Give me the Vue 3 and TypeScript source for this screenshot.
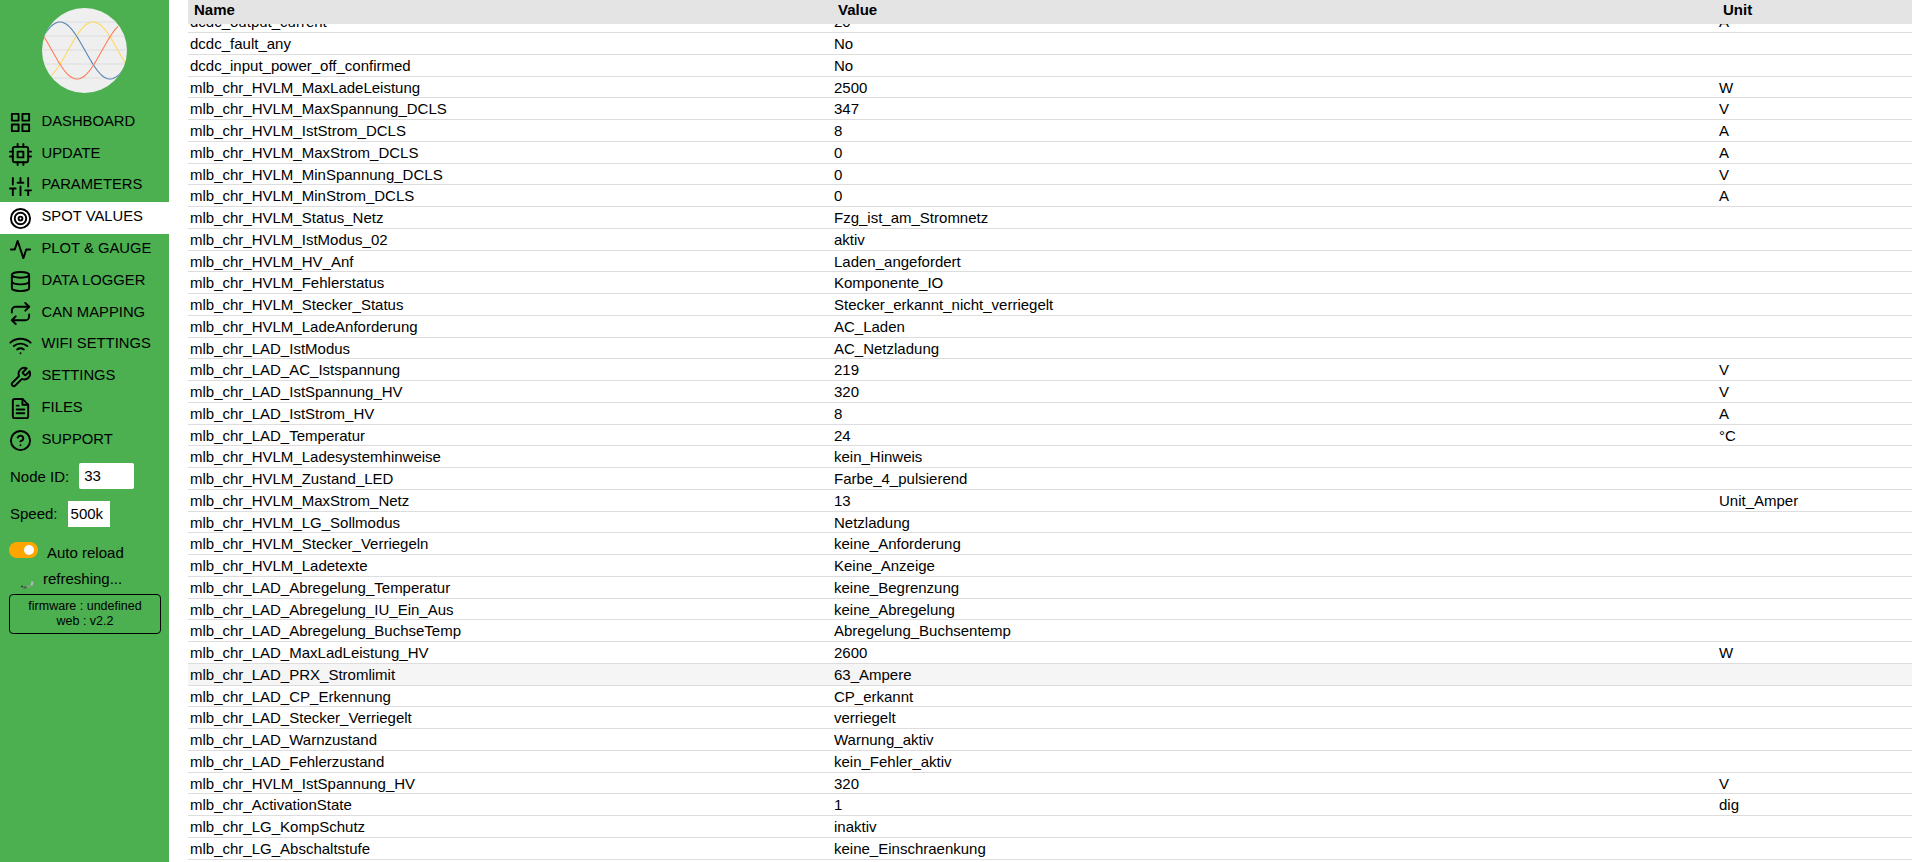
<script setup lang="ts">
interface Row { n: string; v: string; u: string; hover?: boolean }
const raw: [string, string, string][] = [
  ['dcdc_output_current', '20', 'A'],
  ['dcdc_fault_any', 'No', ''],
  ['dcdc_input_power_off_confirmed', 'No', ''],
  ['mlb_chr_HVLM_MaxLadeLeistung', '2500', 'W'],
  ['mlb_chr_HVLM_MaxSpannung_DCLS', '347', 'V'],
  ['mlb_chr_HVLM_IstStrom_DCLS', '8', 'A'],
  ['mlb_chr_HVLM_MaxStrom_DCLS', '0', 'A'],
  ['mlb_chr_HVLM_MinSpannung_DCLS', '0', 'V'],
  ['mlb_chr_HVLM_MinStrom_DCLS', '0', 'A'],
  ['mlb_chr_HVLM_Status_Netz', 'Fzg_ist_am_Stromnetz', ''],
  ['mlb_chr_HVLM_IstModus_02', 'aktiv', ''],
  ['mlb_chr_HVLM_HV_Anf', 'Laden_angefordert', ''],
  ['mlb_chr_HVLM_Fehlerstatus', 'Komponente_IO', ''],
  ['mlb_chr_HVLM_Stecker_Status', 'Stecker_erkannt_nicht_verriegelt', ''],
  ['mlb_chr_HVLM_LadeAnforderung', 'AC_Laden', ''],
  ['mlb_chr_LAD_IstModus', 'AC_Netzladung', ''],
  ['mlb_chr_LAD_AC_Istspannung', '219', 'V'],
  ['mlb_chr_LAD_IstSpannung_HV', '320', 'V'],
  ['mlb_chr_LAD_IstStrom_HV', '8', 'A'],
  ['mlb_chr_LAD_Temperatur', '24', '°C'],
  ['mlb_chr_HVLM_Ladesystemhinweise', 'kein_Hinweis', ''],
  ['mlb_chr_HVLM_Zustand_LED', 'Farbe_4_pulsierend', ''],
  ['mlb_chr_HVLM_MaxStrom_Netz', '13', 'Unit_Amper'],
  ['mlb_chr_HVLM_LG_Sollmodus', 'Netzladung', ''],
  ['mlb_chr_HVLM_Stecker_Verriegeln', 'keine_Anforderung', ''],
  ['mlb_chr_HVLM_Ladetexte', 'Keine_Anzeige', ''],
  ['mlb_chr_LAD_Abregelung_Temperatur', 'keine_Begrenzung', ''],
  ['mlb_chr_LAD_Abregelung_IU_Ein_Aus', 'keine_Abregelung', ''],
  ['mlb_chr_LAD_Abregelung_BuchseTemp', 'Abregelung_Buchsentemp', ''],
  ['mlb_chr_LAD_MaxLadLeistung_HV', '2600', 'W'],
  ['mlb_chr_LAD_PRX_Stromlimit', '63_Ampere', ''],
  ['mlb_chr_LAD_CP_Erkennung', 'CP_erkannt', ''],
  ['mlb_chr_LAD_Stecker_Verriegelt', 'verriegelt', ''],
  ['mlb_chr_LAD_Warnzustand', 'Warnung_aktiv', ''],
  ['mlb_chr_LAD_Fehlerzustand', 'kein_Fehler_aktiv', ''],
  ['mlb_chr_HVLM_IstSpannung_HV', '320', 'V'],
  ['mlb_chr_ActivationState', '1', 'dig'],
  ['mlb_chr_LG_KompSchutz', 'inaktiv', ''],
  ['mlb_chr_LG_Abschaltstufe', 'keine_Einschraenkung', ''],
]
const rows: Row[] = raw.map(([n, v, u]) => ({ n, v, u, hover: n === 'mlb_chr_LAD_PRX_Stromlimit' }))
const nav = ['DASHBOARD', 'UPDATE', 'PARAMETERS', 'SPOT VALUES', 'PLOT & GAUGE', 'DATA LOGGER', 'CAN MAPPING', 'WIFI SETTINGS', 'SETTINGS', 'FILES', 'SUPPORT']

function wave(peakX: number, sign: number, from: number, to: number): string {
  const pts: string[] = []
  for (let x = from; x <= to; x += 1) {
    const y = 42.5 - sign * 28.5 * Math.cos((Math.PI * (x - peakX)) / 50)
    pts.push(`${x} ${y.toFixed(2)}`)
  }
  return 'M' + pts.join('L')
}
const blue = wave(18, 1, 2, 80)
const red = wave(35, -1, 2, 76)
const yellow = wave(51, 1, 9, 83)
</script>

<template>
  <div class="page">
    <aside class="side">
      <div class="logo">
        <svg width="85" height="85" viewBox="0 0 85 85">
          <defs><clipPath id="lc"><circle cx="42.5" cy="42.5" r="42.5" /></clipPath></defs>
          <circle cx="42.5" cy="42.5" r="42.5" fill="#efefef" />
          <g clip-path="url(#lc)" fill="none" stroke-width="1.1">
            <path d="M0 14H85M0 28H85M0 42H85M0 56H85M0 70H85" stroke="#dedede" stroke-width="1.2" />
            <path :d="yellow" stroke="#ffd95e" />
            <path :d="blue" stroke="#5585b5" />
            <path :d="red" stroke="#ff7b54" />
          </g>
        </svg>
      </div>
      <nav class="nav">
        <a v-for="(item, i) in nav" :key="item" class="item" :class="{ active: i === 3 }">
          <svg class="ico" viewBox="0 0 24 24" fill="none" stroke="#000" stroke-width="2" stroke-linecap="round" stroke-linejoin="round">
            <template v-if="i === 0"><rect x="3" y="3" width="7" height="7" /><rect x="14" y="3" width="7" height="7" /><rect x="14" y="14" width="7" height="7" /><rect x="3" y="14" width="7" height="7" /></template>
            <template v-else-if="i === 1"><rect x="4" y="4" width="16" height="16" rx="2" /><rect x="9" y="9" width="6" height="6" /><path d="M9 1v3M15 1v3M9 20v3M15 20v3M20 9h3M20 14h3M1 9h3M1 14h3" /></template>
            <template v-else-if="i === 2"><path d="M4 21v-7M4 10V3M12 21v-9M12 8V3M20 21v-5M20 12V3M1 14h6M9 8h6M17 16h6" /></template>
            <template v-else-if="i === 3"><circle cx="12" cy="12" r="10" /><circle cx="12" cy="12" r="6" /><circle cx="12" cy="12" r="2" /></template>
            <template v-else-if="i === 4"><path d="M22 12h-4l-3 9L9 3l-3 9H2" /></template>
            <template v-else-if="i === 5"><ellipse cx="12" cy="5" rx="9" ry="3" /><path d="M21 12c0 1.66-4 3-9 3s-9-1.34-9-3" /><path d="M3 5v14c0 1.66 4 3 9 3s9-1.34 9-3V5" /></template>
            <template v-else-if="i === 6"><path d="M17 1l4 4-4 4" /><path d="M3 11V9a4 4 0 0 1 4-4h14" /><path d="M7 23l-4-4 4-4" /><path d="M21 13v2a4 4 0 0 1-4 4H3" /></template>
            <template v-else-if="i === 7"><path d="M5 12.55a11 11 0 0 1 14.08 0" /><path d="M1.42 9a16 16 0 0 1 21.16 0" /><path d="M8.53 16.11a6 6 0 0 1 6.95 0" /><path d="M12 20h.01" /></template>
            <template v-else-if="i === 8"><path d="M14.7 6.3a1 1 0 0 0 0 1.4l1.6 1.6a1 1 0 0 0 1.4 0l3.77-3.77a6 6 0 0 1-7.94 7.94l-6.91 6.91a2.12 2.12 0 0 1-3-3l6.91-6.91a6 6 0 0 1 7.94-7.94l-3.76 3.76z" /></template>
            <template v-else-if="i === 9"><path d="M14 2H6a2 2 0 0 0-2 2v16a2 2 0 0 0 2 2h12a2 2 0 0 0 2-2V8z" /><path d="M14 2v6h6M16 13H8M16 17H8M10 9H8" /></template>
            <template v-else><circle cx="12" cy="12" r="10" /><path d="M9.09 9a3 3 0 0 1 5.83 1c0 2-3 3-3 3" /><path d="M12 17h.01" /></template>
          </svg>
          <span>{{ item }}</span>
        </a>
      </nav>
      <div class="field node"><label>Node ID:</label><span class="box b1">33</span></div>
      <div class="field speed"><label>Speed:</label><span class="box b2">500k</span></div>
      <div class="auto"><span class="switch"><i></i></span><span class="autotxt">Auto reload</span></div>
      <div class="refresh">
        <svg class="spin" width="13" height="10" viewBox="0 0 13 10"><path d="M0 6.5h2" stroke="#333" stroke-width="1.5" /><path d="M2.5 7.5h3" stroke="#555" stroke-width="2" /><path d="M6 7l4-1.5" stroke="#999" stroke-width="1.5" /><path d="M10.5 5.5l1-4" stroke="#bbb" stroke-width="2" /></svg>
        <span>refreshing...</span>
      </div>
      <div class="version">firmware : undefined<br />web : v2.2</div>
    </aside>
    <main class="main">
      <div class="table">
        <div class="head"><span class="c1">Name</span><span class="c2">Value</span><span class="c3">Unit</span></div>
        <div class="body">
          <div class="rows">
            <div v-for="r in rows" :key="r.n" class="row" :class="{ hov: r.hover }">
              <span class="c1">{{ r.n }}</span><span class="c2">{{ r.v }}</span><span class="c3">{{ r.u }}</span>
            </div>
          </div>
        </div>
      </div>
    </main>
  </div>
</template>

<style>
html, body { margin: 0; height: 100%; overflow: hidden; background: #fff; }
</style>

<style scoped>
.page { display: flex; height: 862px; overflow: hidden; font-family: "Liberation Sans", Arial, sans-serif; font-size: 15px; color: #000; }
.side { width: 169px; flex: none; background: #4caf50; display: flex; flex-direction: column; }
.logo { height: 85px; padding: 8px 0 0 42px; }
.logo svg { display: block; }
.nav { display: flex; flex-direction: column; margin-top: 13.8px; }
.item { display: flex; align-items: flex-start; height: 31.8px; padding-left: 9px; font-size: 14.8px; color: #000; gap: 9.5px; box-sizing: border-box; padding-top: 4.5px; }
.item span { line-height: 17px; display: block; margin-top: 1.5px; }
.item.active { background: #fff; }
.ico { width: 23px; height: 23px; flex: none; }
.field { display: flex; align-items: center; padding-left: 10px; gap: 10px; height: 26px; }
.node { margin-top: 6.6px; }
.speed { margin-top: 12px; }
.speed label { margin-top: -2px; }
.box { display: block; background: #fff; height: 26px; line-height: 26px; box-sizing: border-box; }
.b1 { width: 55px; padding-left: 5px; border-radius: 2px; }
.b2 { width: 42px; padding-left: 3px; }
.auto { display: flex; align-items: flex-start; margin: 15px 0 0 9px; gap: 9px; height: 16px; }
.autotxt { line-height: 17px; margin-top: 2px; }
.switch { width: 29px; height: 16px; border-radius: 8px; background: #ffa500; position: relative; display: block; flex: none; }
.switch i { position: absolute; right: 3.7px; top: 3px; width: 10px; height: 10px; border-radius: 50%; background: #fff; }
.refresh { display: flex; align-items: flex-start; margin: 12px 0 0 21px; height: 20px; gap: 9px; line-height: 18px; }
.spin { margin-top: 10px; }
.version { margin: 4px 0 0 9px; width: 152px; height: 40px; box-sizing: border-box; border: 1px solid #000; border-radius: 4px; text-align: center; font-size: 12.5px; line-height: 14.7px; padding-top: 4px; }
.main { flex: 1; min-width: 0; padding: 0 8px 0 19px; }
.table { width: 100%; height: 862px; overflow: hidden; }
.head { height: 24px; background: #e4e4e4; display: flex; font-weight: 700; line-height: 19px; }
.head .c1, .head .c2, .head .c3 { padding-left: 6px; }
.body { height: 838px; overflow: hidden; }
.rows { margin-top: -12.76px; }
.row { height: 21.76px; display: flex; box-sizing: border-box; border-bottom: 1px solid #ddd; line-height: 21px; }
.row.hov { background: #f5f5f5; }
.c1, .c2, .c3 { box-sizing: border-box; padding-left: 2px; }
.c1 { width: 644px; flex: none; }
.c2 { width: 885px; flex: none; }
.c3 { flex: 1; }
</style>
